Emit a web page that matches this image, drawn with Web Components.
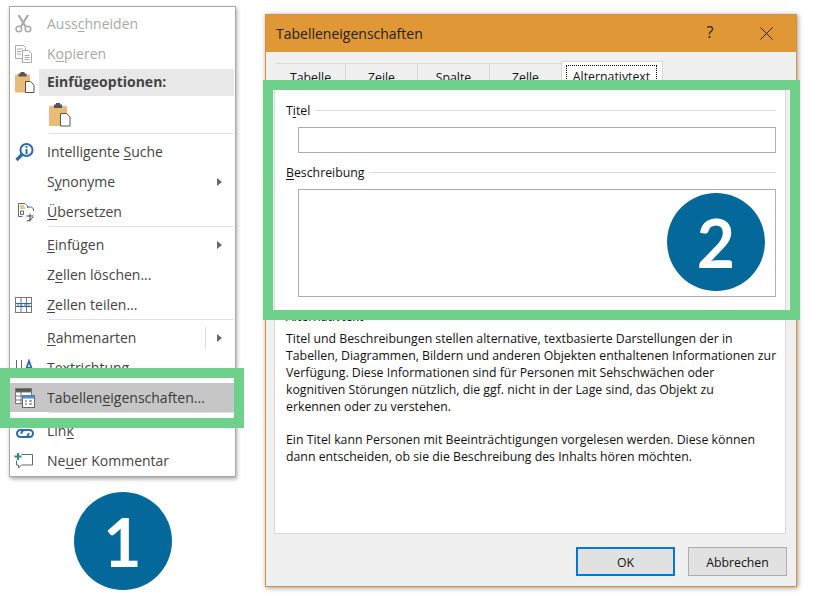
<!DOCTYPE html>
<html lang="de">
<head>
<meta charset="utf-8">
<title>Tabelleneigenschaften</title>
<style>
  html, body { margin: 0; background: #fff; }
  body { font-family: "Open Sans", "Noto Sans", sans-serif; }
</style>
</head>
<body>
<app-stage>
  <ctx-menu>
    <menu-item disabled label="Auss|c|hneiden"><svg slot="icon" width="17" height="18" viewBox="0 0 17 18" fill="none" stroke="#aaa" stroke-width="1.5"><path d="M3.500 0l7 11.500M13 0L6 11.500" stroke-width="2.200"/><circle cx="3.800" cy="14" r="2.800"/><circle cx="13" cy="14" r="2.800"/></svg></menu-item>
    <menu-item disabled label="K|o|pieren"><svg slot="icon" width="18" height="18" viewBox="0 0 18 18" fill="#fff" stroke="#aaa"><path d="M.5 .5h8l2 2v11h-10z"/><path d="M7.500 5.500h6l3 3v9h-9z"/><path d="M2 4h6M2 6.500h4M2 9h4M9.500 10.500h5M9.500 12.500h5M9.500 14.500h5" fill="none"/></svg></menu-item>
    <menu-head>Einfügeoptionen:
      <svg slot="icon" width="20" height="21" viewBox="0 0 20 21"><rect x="0" y="2.500" width="15" height="18" rx="1" fill="#e8bb78"/><rect x="3.500" y="1.500" width="8" height="3" fill="#555"/><rect x="5.500" y="0" width="4" height="2" fill="#555"/><path d="M10.500 9.500h5l3.500 3.500v7.500h-8.500z" fill="#fff" stroke="#555"/></svg>
    </menu-head>
    <menu-paste><svg width="22" height="24" viewBox="0 0 22 24"><rect x="0" y="3" width="18" height="20" rx="1" fill="#e8bb78"/><rect x="5" y="1.500" width="8" height="3.500" fill="#555"/><rect x="7" y="0" width="4" height="2" fill="#555"/><path d="M11.500 10.500h6l3.500 3.500v9h-9.500z" fill="#fff" stroke="#555"/></svg></menu-paste>
    <menu-sep></menu-sep>
    <menu-item label="Intelligente |S|uche"><svg slot="icon" width="19" height="19" viewBox="0 0 19 19" fill="none"><circle cx="11.500" cy="7" r="6" stroke="#2a6aa8" stroke-width="2"/><path d="M7 11.500L1.500 17" stroke="#2a6aa8" stroke-width="3.200"/><path d="M11.500 3v1.800M11.500 6v5" stroke="#2a6aa8" stroke-width="2"/></svg></menu-item>
    <menu-item label="S|y|nonyme" arrow></menu-item>
    <menu-item label="|Ü|bersetzen"><svg slot="icon" style="margin-left:3px" width="17" height="19" viewBox="0 0 17 19" fill="none" stroke="#666"><path d="M7 .5h-6.500v13h4"/><path d="M7 .5l2.500 2.500v2"/><path d="M2 3h4M2 5h5" stroke="#d9822b"/><path d="M10 4h3.500l2 2v2" stroke="#2a6aa8"/><path d="M8.500 13h7M12 10.500v8M9 18c3-1 5.500-2 5.500-4" stroke="#444"/><path d="M2.500 8h3v3.500h-3z"/></svg></menu-item>
    <menu-sep></menu-sep>
    <menu-item label="|E|infügen" arrow></menu-item>
    <menu-item label="Z|e|llen löschen..."></menu-item>
    <menu-item label="|Z|ellen teilen..."><svg slot="icon" width="17" height="16" viewBox="0 0 17 16" fill="#fff" stroke="#777"><rect x="0.500" y="0.500" width="16" height="15"/><path d="M6 .5v15M11.500 .5v15"/><path d="M1 6.500h15M1 9.500h15" stroke="#2a6aa8"/><path d="M2 8h13" stroke="#2a6aa8" stroke-dasharray="2 1.500"/></svg></menu-item>
    <menu-sep></menu-sep>
    <menu-item label="|R|ahmenarten" arrow split></menu-item>
    <menu-item label="Textrichtung"><svg slot="icon" style="margin-left:1px" width="18" height="18" viewBox="0 0 18 18" fill="none" stroke="#666"><path d="M.5 1v16M5.500 1v16"/><path d="M9.500 12l3.500-10 3.500 10M11 9h4" stroke="#2a6aa8" stroke-width="1.800"/></svg></menu-item>
    <menu-item active label="Tabellen|e|igenschaften..."><svg slot="icon" width="20" height="20" viewBox="0 0 20 20" fill="#fff" stroke="#777"><rect x="0.500" y="0.500" width="16" height="15"/><rect x="0.500" y="0.500" width="16" height="3.500" fill="#555"/><path d="M.5 8h8M.5 12h8M6 4v11"/><rect x="7.500" y="7.500" width="12" height="12" fill="#fff" stroke="#666"/><rect x="7.500" y="7.500" width="12" height="3" fill="#4a90d0" stroke="none"/><path d="M10 13h2M14 13h3M10 16h2M14 16h3" stroke="#555"/></svg></menu-item>
    <menu-sep></menu-sep>
    <menu-item label="Lin|k|"><svg slot="icon" style="margin-left:1px" width="18" height="18" viewBox="0 0 18 18" fill="none"><path d="M3 0v5h11V0" stroke="#666"/><path d="M8 8H4.500a3.500 3.500 0 0 0 0 7h5a3.500 3.500 0 0 0 3-4" stroke="#2a6aa8" stroke-width="2"/><path d="M10 15h3.500a3.500 3.500 0 0 0 0-7h-5a3.500 3.500 0 0 0-3 4" stroke="#2a6aa8" stroke-width="2"/></svg></menu-item>
    <menu-item label="Ne|u|er Kommentar"><svg slot="icon" style="margin-left:-1px" width="19" height="17" viewBox="0 0 19 17" fill="none" stroke="#666"><path d="M7.500 1.500h11v10.500h-11l-3 3v-3h-2v-4.500"/><path d="M4 0v7M.5 3.500h7" stroke="#2f8f72" stroke-width="2"/></svg></menu-item>
  </ctx-menu>

  <dlg-window heading="Tabelleneigenschaften">
    <tab-strip>
      <dlg-tab style="--w:70px">Tabelle</dlg-tab>
      <dlg-tab>Zeile</dlg-tab>
      <dlg-tab>Spalte</dlg-tab>
      <dlg-tab>Zelle</dlg-tab>
      <dlg-tab active>Alternativtext</dlg-tab>
    </tab-strip>
    <alt-panel></alt-panel>
    <dlg-button slot="buttons" primary>OK</dlg-button>
    <dlg-button slot="buttons">Abbrechen</dlg-button>
  </dlg-window>

  <note-frame style="left:0;top:368px;width:244px;height:60px"></note-frame>
  <note-frame style="left:263px;top:80px;width:537px;height:240px"></note-frame>
  <step-badge style="left:73.500px;top:492px">1</step-badge>
  <step-badge style="left:667px;top:193px">2</step-badge>
</app-stage>

<script>
function shadow(el, html) {
  el.attachShadow({ mode: "open" }).innerHTML = html
}

// "Aus|s|chneiden" -> access key between the pipes
function accessKey(label) {
  const parts = label.split("|")
  return parts.length < 3 ? label : `${parts[0]}<u>${parts[1]}</u>${parts[2]}`
}

class AppStage extends HTMLElement {
  constructor() {
    super()
    shadow(this, `
      <style>
        :host { display: block; position: relative; width: 828px; height: 608px; overflow: hidden; background: #fff; }
      </style>
      <slot></slot>
    `)
  }
}

class CtxMenu extends HTMLElement {
  constructor() {
    super()
    shadow(this, `
      <style>
        :host {
          position: absolute; left: 9px; top: 6px; width: 224px;
          display: flex; flex-direction: column;
          padding: 2px 1px 0 0;
          height: 467px;
          background: #fff;
          border: 1px solid #a8a8a8;
          box-shadow: 1px 2px 4px rgba(0,0,0,.35);
          font-size: 14px; color: #444;
        }
      </style>
      <slot></slot>
    `)
  }
}

class MenuItem extends HTMLElement {
  constructor() {
    super()
    const arrow = this.hasAttribute("arrow")
    const split = this.hasAttribute("split")
    shadow(this, `
      <style>
        :host {
          display: grid; grid-template-columns: 37px 1fr 40px; align-items: center;
          flex: none; height: 30px; white-space: nowrap;
        }
        :host([disabled]) { color: #a8a8a8; }
        :host([active]) { background: linear-gradient(#c6c6c6 0 29px, #fff 29px); color: #3a3a3a; }
        .icon { display: flex; align-items: center; padding-left: 5px; }
        .label { padding-bottom: 2px; }
        .tail { display: flex; align-items: center; justify-content: flex-end; height: 100%; padding-right: 12px; }
        .arrow { width: 0; height: 0; border-left: 5px solid #666; border-top: 4px solid transparent; border-bottom: 4px solid transparent; }
        .split { width: 1px; height: 22px; background: #ddd; margin-right: 11px; }
        u { text-underline-offset: 2px; text-decoration-thickness: 1px; }
      </style>
      <div class="icon"><slot name="icon"></slot></div>
      <div class="label">${accessKey(this.getAttribute("label"))}</div>
      <div class="tail">${split ? '<div class="split"></div>' : ""}${arrow ? '<div class="arrow"></div>' : ""}</div>
    `)
  }
}

class MenuHead extends HTMLElement {
  constructor() {
    super()
    shadow(this, `
      <style>
        :host { display: grid; grid-template-columns: 29px 1fr; align-items: center; flex: none; height: 26px; font-weight: 700; color: #444; }
        .icon { display: flex; padding-left: 5px; }
        .bar { background: #e8e8e8; height: 27px; display: flex; align-items: center; padding: 0 0 2px 8px; box-sizing: border-box; }
      </style>
      <div class="icon"><slot name="icon"></slot></div>
      <div class="bar"><slot></slot></div>
    `)
  }
}

class MenuPaste extends HTMLElement {
  constructor() {
    super()
    shadow(this, `
      <style>
        :host { display: flex; align-items: center; flex: none; height: 39px; padding-left: 39px; }
      </style>
      <slot></slot>
    `)
  }
}

class MenuSep extends HTMLElement {
  constructor() {
    super()
    shadow(this, `
      <style>
        :host { display: block; flex: none; height: 1px; margin: -1px 0 3px 39px; background: #e0e0e0; }
      </style>
    `)
  }
}

class DlgWindow extends HTMLElement {
  constructor() {
    super()
    shadow(this, `
      <style>
        :host {
          position: absolute; left: 265px; top: 14px; width: 530px; height: 571px;
          display: flex; flex-direction: column;
          background: #f0f0f0;
          border: 1px solid #d69039;
          box-shadow: 1px 1px 5px rgba(0,0,0,.4);
          font-size: 12.300px; color: #111;
        }
        .title {
          flex: none; height: 37px; background: #e09735;
          display: flex; align-items: center; padding-left: 10px;
          font-size: 14px; color: #222;
        }
        .title span { flex: 1; }
        .help { flex: none; width: 16px; font-size: 16px; text-align: center; margin-right: 42px; padding-bottom: 3px; }
        .close { flex: none; margin-right: 23px; display: block; }
        .body { flex: 1; display: flex; flex-direction: column; padding: 9px 10px 10px 8px; min-height: 0; }
        .buttons { flex: none; display: flex; justify-content: flex-end; gap: 13px; margin: 13px -1px 0 0; }
      </style>
      <div class="title">
        <span>${this.getAttribute("heading")}</span>
        <div class="help">?</div>
        <svg class="close" width="13" height="13" viewBox="0 0 13 13" stroke="#222" fill="none"><path d="M.5 .5l12 12M12.500 .5l-12 12"/></svg>
      </div>
      <div class="body">
        <slot></slot>
        <div class="buttons"><slot name="buttons"></slot></div>
      </div>
    `)
  }
}

class TabStrip extends HTMLElement {
  constructor() {
    super()
    shadow(this, `
      <style>
        :host { display: flex; flex: none; height: 20px; align-items: flex-end; margin-left: 2px; }
      </style>
      <slot></slot>
    `)
  }
}

class DlgTab extends HTMLElement {
  constructor() {
    super()
    shadow(this, `
      <style>
        :host {
          display: flex; justify-content: center; box-sizing: border-box;
          width: var(--w, 72px); height: 18px; padding-top: 5px;
          border: 1px solid #d9d9d9; border-left: none; border-bottom: none;
          white-space: nowrap;
        }
        :host([active]) {
          width: 102px; height: 20px; background: #fff; padding: 3px 5px 0 4px;
          border-left: 1px solid #d9d9d9; margin-left: -1px;
        }
        :host([active]) .focus {
          outline: 1px dotted #000; outline-offset: -1px;
          box-sizing: border-box; width: 91px; height: 24px; padding-top: 3px; text-align: center;
        }
      </style>
      <div class="focus"><slot></slot></div>
    `)
  }
}

class AltPanel extends HTMLElement {
  constructor() {
    super()
    shadow(this, `
      <style>
        :host {
          flex: 1; display: flex; flex-direction: column; min-height: 0;
          background: #fff; border: 1px solid #d9d9d9;
          padding: 19px 9px 0 11px;
        }
        .field { height: 24px; margin-left: 12px; border: 1px solid #adadad; flex: none; }
        .area { height: 106px; margin-left: 12px; border: 1px solid #adadad; flex: none; }
        .t2 { margin-top: 10px; }
        group-line { flex: none; }
        .help { white-space: nowrap; line-height: 16.900px; margin-top: 6px; }
        p { margin: 0; }
        p + p { margin-top: 16.500px; }
        .g2 { margin-top: 10px; }
      </style>
      <group-line label="T|i|tel"></group-line>
      <div class="field"></div>
      <group-line class="t2" label="|B|eschreibung"></group-line>
      <div class="area"></div>
      <group-line class="g2" label="Alternativtext" plain></group-line>
      <div class="help">
        <p>Titel und Beschreibungen stellen alternative, textbasierte Darstellungen der in<br>
        Tabellen, Diagrammen, Bildern und anderen Objekten enthaltenen Informationen zur<br>
        Verfügung. Diese Informationen sind für Personen mit Sehschwächen oder<br>
        kognitiven Störungen nützlich, die ggf. nicht in der Lage sind, das Objekt zu<br>
        erkennen oder zu verstehen.</p>
        <p>Ein Titel kann Personen mit Beeinträchtigungen vorgelesen werden. Diese können<br>
        dann entscheiden, ob sie die Beschreibung des Inhalts hören möchten.</p>
      </div>
    `)
  }
}

class GroupLine extends HTMLElement {
  constructor() {
    super()
    shadow(this, `
      <style>
        :host { display: flex; align-items: center; gap: 5px; height: 18px; margin-bottom: 8px; white-space: nowrap; }
        :host([plain]) { margin-bottom: 0; }
        :host([plain]) .line { display: none; }
        .line { flex: 1; height: 1px; background: #dcdcdc; }
        u { text-underline-offset: 2px; }
      </style>
      <div>${accessKey(this.getAttribute("label"))}</div>
      <div class="line"></div>
    `)
  }
}

class DlgButton extends HTMLElement {
  constructor() {
    super()
    shadow(this, `
      <style>
        :host {
          display: flex; align-items: center; justify-content: center; box-sizing: border-box;
          width: 99px; height: 29px; padding-top: 1px; background: #e1e1e1; border: 1px solid #adadad;
        }
        :host([primary]) { border: 2px solid #0078d7; }
      </style>
      <slot></slot>
    `)
  }
}

class NoteFrame extends HTMLElement {
  constructor() {
    super()
    shadow(this, `
      <style>
        :host { position: absolute; box-sizing: border-box; border: 10px solid #6fd08c; }
      </style>
    `)
  }
}

class StepBadge extends HTMLElement {
  constructor() {
    super()
    shadow(this, `
      <style>
        :host {
          position: absolute; width: 98px; height: 98px; border-radius: 50%;
          background: #04689a; color: #fff;
          display: flex; align-items: center; justify-content: center;
          font: 700 66px Lato, sans-serif;
        }
      </style>
      <slot></slot>
    `)
  }
}

customElements.define("app-stage", AppStage)
customElements.define("ctx-menu", CtxMenu)
customElements.define("menu-item", MenuItem)
customElements.define("menu-head", MenuHead)
customElements.define("menu-paste", MenuPaste)
customElements.define("menu-sep", MenuSep)
customElements.define("dlg-window", DlgWindow)
customElements.define("tab-strip", TabStrip)
customElements.define("dlg-tab", DlgTab)
customElements.define("alt-panel", AltPanel)
customElements.define("group-line", GroupLine)
customElements.define("dlg-button", DlgButton)
customElements.define("note-frame", NoteFrame)
customElements.define("step-badge", StepBadge)
</script>
</body>
</html>
